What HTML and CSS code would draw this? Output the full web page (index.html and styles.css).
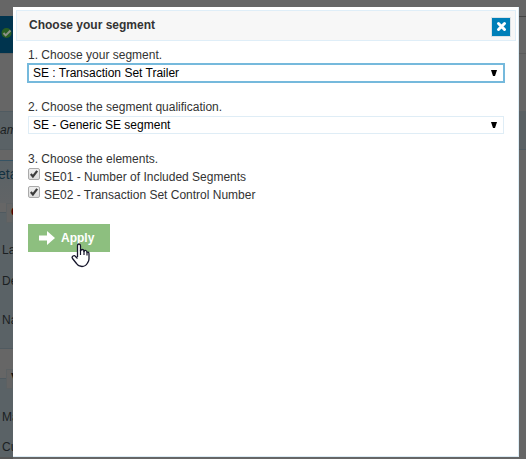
FILE: index.html
```html
<!DOCTYPE html>
<html lang="en">
<head>
<meta charset="utf-8">
<title>Choose your segment</title>
<link rel="stylesheet" href="styles.css">
</head>
<body>
<div class="page">
  <div class="topbar"></div>
  <div class="toolbar"><svg width="11" height="12" viewBox="0 0 11 12"><circle cx="5.5" cy="6" r="5" fill="#285d22"/><path d="M2.5 6l2.2 2.4L9.5 3.5" fill="none" stroke="#8c9188" stroke-width="2"/></svg></div>
  <div class="blank"></div>
  <div class="filter">am</div>
  <div class="gap"></div>
  <div class="details">eta</div>
  <div class="tabline"><b class="tab red">C</b></div>
  <div class="row row-la">La</div>
  <div class="row row-de">De</div>
  <div class="row row-na">Na</div>
  <div class="section"></div>
  <div class="tabline"><b class="tab">V</b></div>
  <div class="row row-ma">Ma</div>
  <div class="row row-cu">Cu</div>
  <div class="footer"></div>
</div>
<div class="side"><div class="side-top"></div><div class="side-mid"></div><div class="side-filter"></div></div>
<main class="dialog">
  <header class="dialog-head">
    <h1>Choose your segment</h1>
    <button class="close" aria-label="Close"><svg width="11" height="11" viewBox="0 0 11 11"><path d="M2.5 2.500l6 6M8.500 2.500l-6 6" stroke="#fff" stroke-width="3" stroke-linecap="round"/></svg></button>
  </header>
  <div class="form">
    <div class="label">1. Choose your segment.</div>
    <div class="select focused"><span>SE : Transaction Set Trailer</span><svg width="6" height="6" viewBox="0 0 6 6"><path d="M0 0h6L4 6H2z"/></svg></div>
    <div class="label l2">2. Choose the segment qualification.</div>
    <div class="select"><span>SE - Generic SE segment</span><svg width="6" height="6" viewBox="0 0 6 6"><path d="M0 0h6L4 6H2z"/></svg></div>
    <div class="label l3">3. Choose the elements.</div>
    <div class="check"><i><svg width="10" height="10" viewBox="0 0 11 11"><path d="M2 5.500l2.300 2.700L9 2" fill="none" stroke="#3c3c3c" stroke-width="2.400"/></svg></i><span>SE01 - Number of Included Segments</span></div>
    <div class="check"><i><svg width="10" height="10" viewBox="0 0 11 11"><path d="M2 5.500l2.300 2.700L9 2" fill="none" stroke="#3c3c3c" stroke-width="2.400"/></svg></i><span>SE02 - Transaction Set Control Number</span></div>
    <div class="apply"><svg width="16" height="14" viewBox="0 0 16 14"><path d="M0 4.5h8V0l8 7-8 7V9.500H0z" fill="#fff"/></svg><span>Apply</span></div>
  </div>
</main>
<svg class="cursor" width="19" height="25" viewBox="0 0 19 25"><path d="M6.500 14V3Q6.500 1 8 1T9.500 3V8Q10 6.500 11.500 6.500T13 8.500Q13.500 7 14.800 7.500T16 9.500Q18 8.500 18 11V16Q18 18 16.500 20Q14.500 23.500 11 23.500Q7.500 23.500 5.500 20.500L1.500 15.500Q.5 14 2 13T4.500 13.500L6.500 15.500" fill="#fff" stroke="#15152b" stroke-width="1.300" stroke-linejoin="round"/><path d="M9.500 7v5M13 8v4M16 9.500V12.500" stroke="#15152b" stroke-width="1.200"/></svg>
</body>
</html>
```
FILE: styles.css
```css
* { box-sizing: border-box; }
body {
  margin: 0;
  width: 526px;
  height: 459px;
  overflow: hidden;
  position: relative;
  display: flex;
  justify-content: space-between;
  background: #666;
  font: 12px/16px "Liberation Sans", Arial, sans-serif;
  color: #333;
}
.page { width: 13px; height: 459px; overflow: hidden; color: #1b1f22; white-space: nowrap; }
.topbar { height: 16px; }
.toolbar { height: 37px; background: #00344e; padding: 11px 0 0 1px; }
.toolbar svg { display: block; }
.blank { height: 58px; border-top: 1px solid #5d5d5d; }
.filter { height: 39px; background: #5a6266; border-top: 1px solid #505b61; border-bottom: 1px solid #555d61; font-style: italic; line-height: 37px; }
.gap { height: 10px; }
.details { height: 43px; border-top: 1px solid #355364; background: linear-gradient(#5a6266, #616466); color: #12303f; font-size: 14px; line-height: 26px; }
.details { text-indent: -2px; }
.tabline { height: 20px; padding-left: 6px; background: linear-gradient(#666 9px, #505a60 9px, #505a60 10px, #5a6266 10px); }
.tab { display: block; height: 20px; padding-left: 4px; background: #646464; border: 1px solid #5c6163; color: #111; font-size: 13px; line-height: 16px; }
.red { color: #500; }
.row { background: #5a6266; padding-left: 2px; }
.row-la { height: 42px; line-height: 54px; }
.row-de { height: 34px; line-height: 32px; }
.row-na { height: 49px; line-height: 43px; }
.section { height: 21px; border-top: 1px solid #505a60; background: #666; }
.row-ma { height: 42px; line-height: 56px; }
.row-cu { height: 26px; line-height: 32px; }
.footer { height: 2px; background: #555; }
.side { width: 7px; }
.side-top { height: 16px; }
.side-mid { height: 95px; border-top: 1px solid #444; background: linear-gradient(#5b5b5b, #5b5b5b) 0 36px / 7px 1px no-repeat; }
.side-filter { height: 39px; background: #5b6164; border-bottom: 1px solid #505b61; }
.dialog { position: absolute; left: 13px; top: 7px; width: 506px; height: 450px; padding: 3px; background: #fff; border-right: 1px solid #dcecf5; border-bottom: 1px solid #dcecf5; }
.dialog-head { width: 500px; height: 31px; padding: 0 4px 0 12px; display: flex; align-items: center; justify-content: space-between; background: #f7f7f7; border: 1px solid #dfeef8; }
h1 { margin: 0; font-size: 12px; line-height: 15px; white-space: nowrap; }
.close { width: 20px; height: 20px; padding: 0; border: 1px solid #dce3e7; background: #007fb8; display: grid; place-items: center; position: relative; top: 1px; }
.form { padding: 6px 12px; }
.label { height: 16px; white-space: nowrap; }
.select { width: 476px; height: 18px; display: flex; align-items: center; justify-content: space-between; padding: 0 6px 0 4px; border: 1px solid #dfedf6; color: #000; white-space: nowrap; }
.focused { width: 478px; height: 20px; margin-left: -1px; border: 2px solid #75b9dc; }
.l2 { margin-top: 16px; height: 17px; }
.l3 { margin-top: 17px; }
.check { height: 18px; display: flex; align-items: center; white-space: nowrap; }
.check span { position: relative; top: 1px; }
.check i { width: 12px; height: 12px; margin: -4px 4px 0 0; border: 1px solid #aaa; border-radius: 2px; background: linear-gradient(#eee, #ddd); display: grid; place-items: center; }
.check svg { display: block; }
.apply { width: 82px; height: 28px; margin-top: 21px; padding-left: 11px; display: flex; align-items: center; gap: 6px; background: #8dbf7f; color: #fff; font-weight: bold; }
.cursor { position: absolute; left: 71px; top: 243px; }
```
